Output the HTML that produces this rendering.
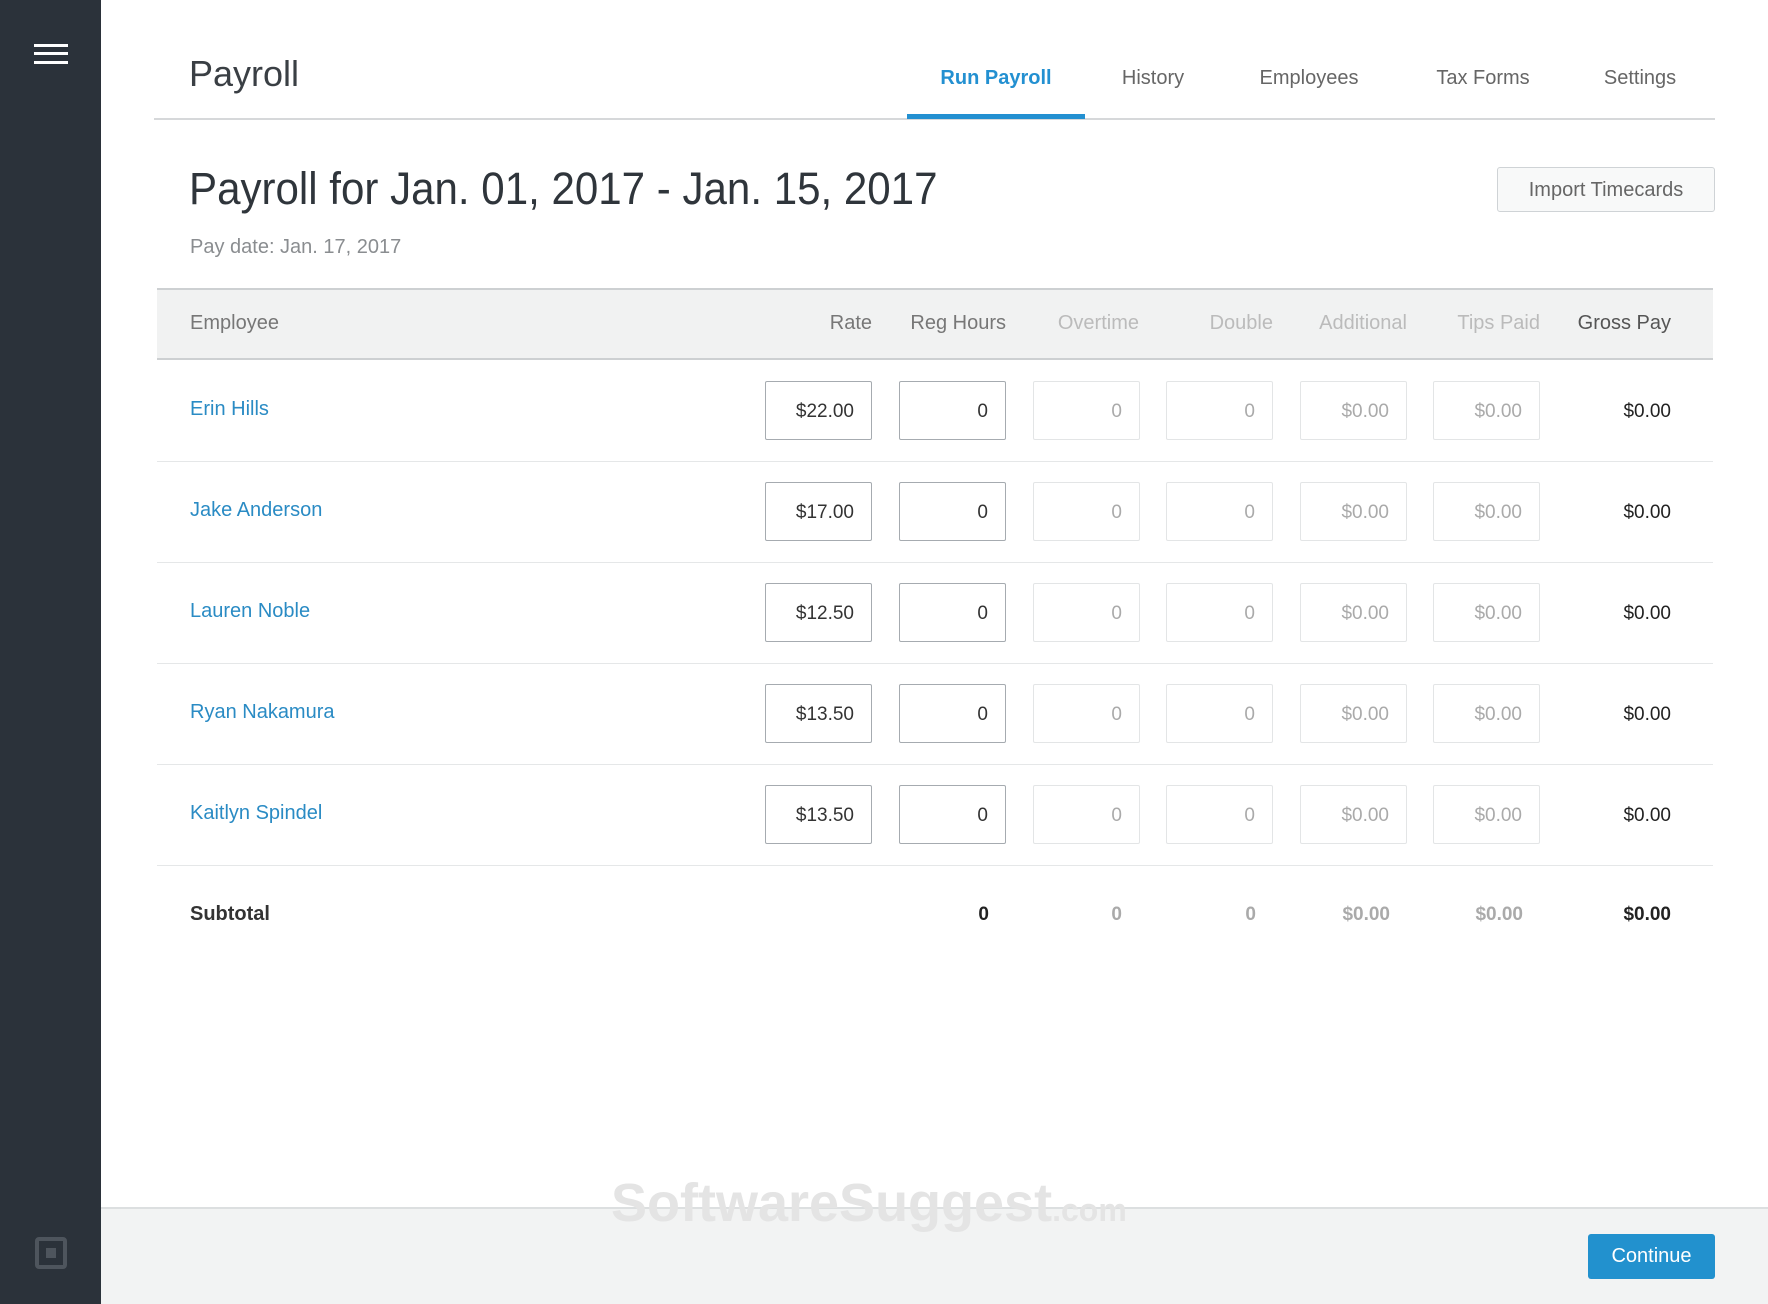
<!DOCTYPE html>
<html><head><meta charset="utf-8"><style>
*{margin:0;padding:0;box-sizing:border-box}
body{width:1768px;height:1304px;position:relative;background:#fff;font-family:"Liberation Sans",sans-serif;overflow:hidden;color:#3a3f44}
.side{position:absolute;left:0;top:0;width:101px;height:1304px;background:#2b323a}
.hb{position:absolute;left:34px;width:34px;height:3px;background:#fff}
.abs{position:absolute;white-space:nowrap}
.tab{position:absolute;top:67px;font-size:20px;color:#666;transform:translateX(-50%)}
.inp{position:absolute;width:107px;height:59px;border:1px solid #e3e5e6;border-radius:2px;text-align:right;padding-right:17px;line-height:59px;font-size:19px;color:#aaa}
.dk{border-color:#a6abb0;color:#333}
.row{position:absolute;left:157px;width:1556px;height:1px;background:#e5e7e8}
.name{position:absolute;left:190px;font-size:20px;color:#2a8bc4}
.hd{position:absolute;top:312px;font-size:20px;transform:translateX(-100%);color:#777}
.lt{color:#bbb}
.num{position:absolute;font-size:19px;transform:translateX(-100%)}
</style></head><body>
<div class="side">
<div class="hb" style="top:44px"></div><div class="hb" style="top:52px"></div><div class="hb" style="top:61px"></div>
<div style="position:absolute;left:35px;top:1237px;width:32px;height:32px;border:4px solid #4e555d;border-radius:4px"><div style="position:absolute;left:7px;top:7px;width:10px;height:10px;background:#4e555d"></div></div>
</div>
<div class="abs" style="left:189px;top:53px;font-size:36px;color:#3a3f44">Payroll</div>
<div class="tab" style="left:996px;color:#2390d1;font-weight:bold">Run Payroll</div>
<div class="tab" style="left:1153px">History</div>
<div class="tab" style="left:1309px">Employees</div>
<div class="tab" style="left:1483px">Tax Forms</div>
<div class="tab" style="left:1640px">Settings</div>
<div style="position:absolute;left:154px;top:118px;width:1561px;height:2px;background:#d6d8da"></div>
<div style="position:absolute;left:907px;top:114px;width:178px;height:5px;background:#2390d1"></div>
<div class="abs" style="left:189px;top:163px;font-size:45px;color:#2f353b;transform:scaleX(0.935);transform-origin:left top">Payroll for Jan. 01, 2017 - Jan. 15, 2017</div>
<div class="abs" style="left:190px;top:236px;font-size:20px;color:#8a8d90">Pay date: Jan. 17, 2017</div>
<div style="position:absolute;left:1497px;top:167px;width:218px;height:45px;border:1px solid #cfd3d6;border-radius:3px;background:#f8f9f9;text-align:center;line-height:45px;font-size:20px;color:#666">Import Timecards</div>
<div style="position:absolute;left:157px;top:288px;width:1556px;height:72px;background:#f1f2f2;border-top:2px solid #cdd0d2;border-bottom:2px solid #cdd0d2"></div>
<div class="abs" style="left:190px;top:312px;font-size:20px;color:#777">Employee</div>
<div class="hd" style="left:872px">Rate</div>
<div class="hd" style="left:1006px">Reg Hours</div>
<div class="hd lt" style="left:1139px">Overtime</div>
<div class="hd lt" style="left:1273px">Double</div>
<div class="hd lt" style="left:1407px">Additional</div>
<div class="hd lt" style="left:1540px">Tips Paid</div>
<div class="hd" style="left:1671px;color:#555">Gross Pay</div>

<div id="rows"></div>
<script>
var n=[["Erin Hills","$22.00"],["Jake Anderson","$17.00"],["Lauren Noble","$12.50"],["Ryan Nakamura","$13.50"],["Kaitlyn Spindel","$13.50"]];
var h="";
for(var i=0;i<5;i++){var t=360+i*101;var it=t+21;
h+='<div class="name" style="top:'+(t+38)+'px">'+n[i][0]+'</div>';
h+='<div class="inp dk" style="left:765px;top:'+it+'px">'+n[i][1]+'</div>';
h+='<div class="inp dk" style="left:899px;top:'+it+'px">0</div>';
h+='<div class="inp" style="left:1033px;top:'+it+'px">0</div>';
h+='<div class="inp" style="left:1166px;top:'+it+'px">0</div>';
h+='<div class="inp" style="left:1300px;top:'+it+'px">$0.00</div>';
h+='<div class="inp" style="left:1433px;top:'+it+'px">$0.00</div>';
h+='<div class="num" style="left:1671px;top:'+(t+41)+'px;color:#222">$0.00</div>';
h+='<div class="row" style="top:'+(t+101)+'px"></div>';}
document.getElementById("rows").innerHTML=h;
</script>
<div class="abs" style="left:190px;top:903px;font-size:20px;font-weight:bold;color:#333">Subtotal</div>
<div class="num" style="left:989px;top:904px;color:#222;font-weight:bold">0</div>
<div class="num" style="left:1122px;top:904px;color:#aaa;font-weight:bold">0</div>
<div class="num" style="left:1256px;top:904px;color:#aaa;font-weight:bold">0</div>
<div class="num" style="left:1390px;top:904px;color:#aaa;font-weight:bold">$0.00</div>
<div class="num" style="left:1523px;top:904px;color:#aaa;font-weight:bold">$0.00</div>
<div class="num" style="left:1671px;top:904px;color:#222;font-weight:bold">$0.00</div>

<div style="position:absolute;left:101px;top:1207px;width:1667px;height:97px;background:#f2f3f3;border-top:2px solid #dcdfe0"></div>
<div class="abs" style="left:611px;top:1172px;font-size:54px;font-weight:bold;color:#e4e4e4">SoftwareSuggest<span style="font-size:32px">.com</span></div>
<div style="position:absolute;left:1588px;top:1234px;width:127px;height:45px;background:#2291ce;border-radius:3px;color:#fff;text-align:center;line-height:45px;font-size:20px">Continue</div>
</body></html>
